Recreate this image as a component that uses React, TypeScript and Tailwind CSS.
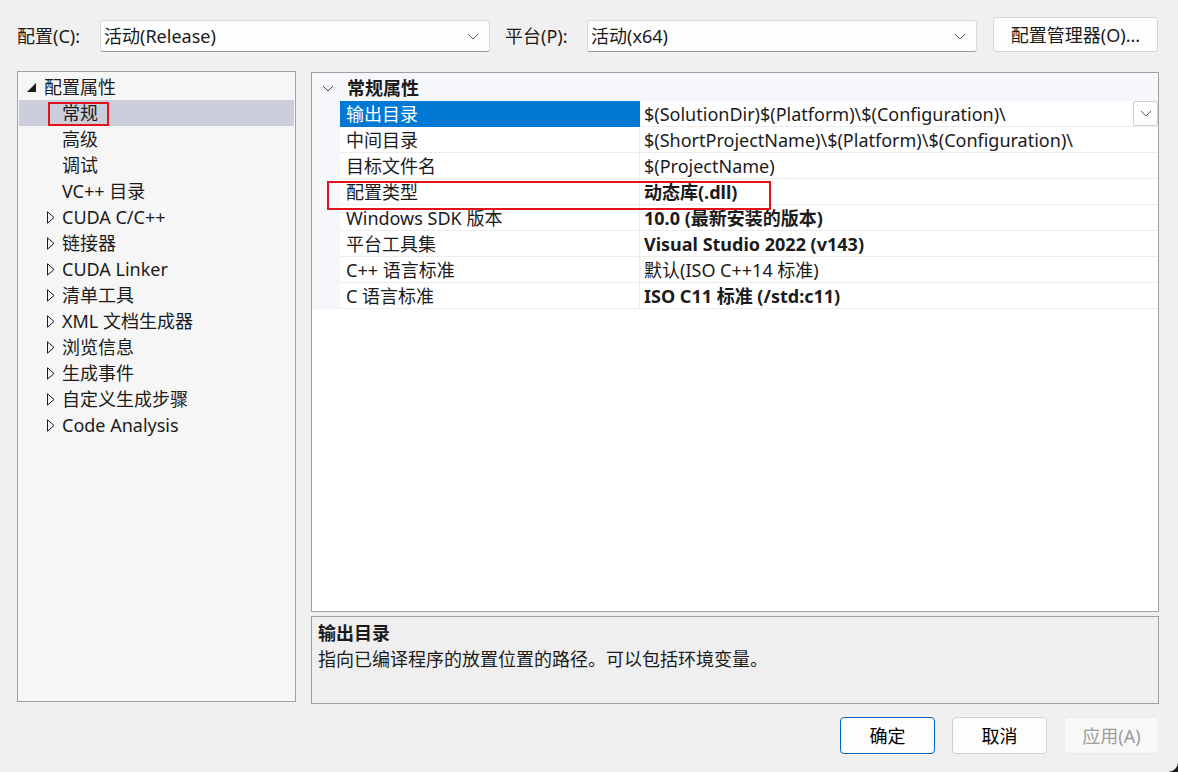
import React from 'react'

interface Prop {
  name: string
  value: string
  bold?: boolean
}

const PROPS: Prop[] = [
  { name: '输出目录', value: '$(SolutionDir)$(Platform)\\$(Configuration)\\' },
  { name: '中间目录', value: '$(ShortProjectName)\\$(Platform)\\$(Configuration)\\' },
  { name: '目标文件名', value: '$(ProjectName)' },
  { name: '配置类型', value: '动态库(.dll)', bold: true },
  { name: 'Windows SDK 版本', value: '10.0 (最新安装的版本)', bold: true },
  { name: '平台工具集', value: 'Visual Studio 2022 (v143)', bold: true },
  { name: 'C++ 语言标准', value: '默认(ISO C++14 标准)' },
  { name: 'C 语言标准', value: 'ISO C11 标准 (/std:c11)', bold: true },
]

const CHILDREN = ['常规', '高级', '调试', 'VC++ 目录']
const GROUPS = ['CUDA C/C++', '链接器', 'CUDA Linker', '清单工具', 'XML 文档生成器', '浏览信息', '生成事件', '自定义生成步骤', 'Code Analysis']

function Chevron({ className }: { className?: string }) {
  return (
    <svg width="12" height="7" viewBox="0 0 12 7" className={className} fill="none">
      <path d="M1 1l5 5 5-5" stroke="currentColor" strokeWidth="1" />
    </svg>
  )
}

function Combo({ text }: { text: string }) {
  return (
    <div className="w-[390px] h-[32px] flex items-center justify-between pl-[3px] pr-[10px] bg-[#fdfdfd] border border-[#d9d9d9] border-b-[#9a9a9a] rounded-[3px]">
      <span>{text}</span>
      <Chevron className="text-[#5f5f5f]" />
    </div>
  )
}

function Btn({ label, primary, disabled }: { label: string; primary?: boolean; disabled?: boolean }) {
  const cls = primary
    ? 'border-[#0067c0] bg-[#fdfdfd] text-black'
    : disabled
      ? 'border-[#ececec] bg-[#f8f8f8] text-[#9d9d9d]'
      : 'border-[#d0d0d0] bg-[#fdfdfd] text-black'
  return (
    <div className={`w-[95px] h-[37px] flex items-center justify-center rounded-[4px] border ${cls}`}>
      {label}
    </div>
  )
}

export default function App() {
  return (
    <div
      className="relative w-[1178px] h-[772px] bg-[#f0f0f0] text-[18px] leading-[24px] text-[#1b1b1b] overflow-hidden"
      style={{ fontFamily: '"Noto Sans", "Noto Sans CJK SC", sans-serif' }}
    >
      {/* Top config bar */}
      <div className="flex items-center pt-[17px] pl-[17px] h-[52px]">
        <span className="w-[83px] mt-[3px]">配置(C):</span>
        <div className="mt-[3px]"><Combo text="活动(Release)" /></div>
        <span className="w-[82px] ml-[15px] mt-[3px]">平台(P):</span>
        <div className="mt-[3px]"><Combo text="活动(x64)" /></div>
        <div className="ml-[16px] w-[165px] h-[35px] flex items-center justify-center bg-[#fdfdfd] border border-[#d5d5d5] rounded-[4px]">
          配置管理器(O)...
        </div>
      </div>

      {/* Main area */}
      <div className="flex mt-[19px] pl-[17px]">
        {/* Tree */}
        <div className="w-[279px] h-[631px] bg-[#f6f6f6] border border-[#a0a0a0] pt-[2px] pl-px pr-px">
          <div className="h-[26px] flex items-center">
            <svg width="9" height="9" viewBox="0 0 9 9" className="ml-[8px] mr-[8px]">
              <path d="M9 0V9H0Z" fill="#1b1b1b" />
            </svg>
            <span>配置属性</span>
          </div>
          {CHILDREN.map((c, i) => (
            <div key={c} className={`h-[26px] flex items-center pl-[43px] ${i === 0 ? 'bg-[#cccedb]' : ''}`}>
              <span className="relative">
                {c}
                {i === 0 && <span className="absolute -left-[14px] -right-[11px] top-[1px] -bottom-[1px] border-2 border-[#e3131c]" />}
              </span>
            </div>
          ))}
          {GROUPS.map((g) => (
            <div key={g} className="h-[26px] flex items-center pl-[28px]">
              <svg width="8" height="13" viewBox="0 0 8 13" className="mr-[7px]">
                <path d="M0.5 0.8L7 6.5 0.5 12.2Z" fill="none" stroke="#1b1b1b" strokeWidth="1" />
              </svg>
              <span>{g}</span>
            </div>
          ))}
        </div>

        {/* Right column */}
        <div className="ml-[15px] w-[848px] flex flex-col">
          <div className="h-[540px] bg-white border border-[#a0a0a0] mt-px">
            <div className="h-[28px] flex items-center bg-[#f5f7fa] pt-[2px]">
              <Chevron className="ml-[10px] mr-[13px] text-[#3c3c3c]" />
              <span className="font-bold">常规属性</span>
            </div>
            <div className="relative">
              {PROPS.map((p, i) => (
                <div key={p.name} className="flex h-[26px]">
                  <div className="w-[28px] bg-[#f5f7fa]" />
                  <div
                    className={`w-[300px] flex items-center pl-[6px] border-b border-r ${
                      i === 0 ? 'bg-[#0078d4] text-white border-[#0078d4]' : 'border-[#ececec]'
                    }`}
                  >
                    {p.name}
                  </div>
                  <div className={`flex-1 flex items-center justify-between pl-[4px] border-b border-[#ececec] ${p.bold ? 'font-bold' : ''}`}>
                    <span>{p.value}</span>
                    {i === 0 && (
                      <div className="w-[25px] h-[25px] flex items-center justify-center border border-[#d0d0d0] bg-[#fdfdfd] rounded-[2px]">
                        <Chevron className="text-[#5f5f5f]" />
                      </div>
                    )}
                  </div>
                </div>
              ))}
              <div className="absolute left-[15px] top-[80px] w-[444px] h-[29px] border-2 border-[#e3131c]" />
            </div>
          </div>
          <div className="mt-[4px] h-[88px] bg-[#efefef] border border-[#a0a0a0] pl-[6px] pt-[3px]">
            <div className="font-bold leading-[26px]">输出目录</div>
            <div className="leading-[26px]">指向已编译程序的放置位置的路径。可以包括环境变量。</div>
          </div>
        </div>
      </div>

      {/* Buttons */}
      <div className="flex justify-end gap-[17px] pr-[19px] mt-[13px]">
        <Btn label="确定" primary />
        <Btn label="取消" />
        <Btn label="应用(A)" disabled />
      </div>

      <svg width="10" height="10" viewBox="0 0 10 10" className="absolute right-0 bottom-0">
        <path d="M10 0V10H0A10 10 0 0 0 10 0Z" fill="#1a1a1a" />
      </svg>
    </div>
  )
}
